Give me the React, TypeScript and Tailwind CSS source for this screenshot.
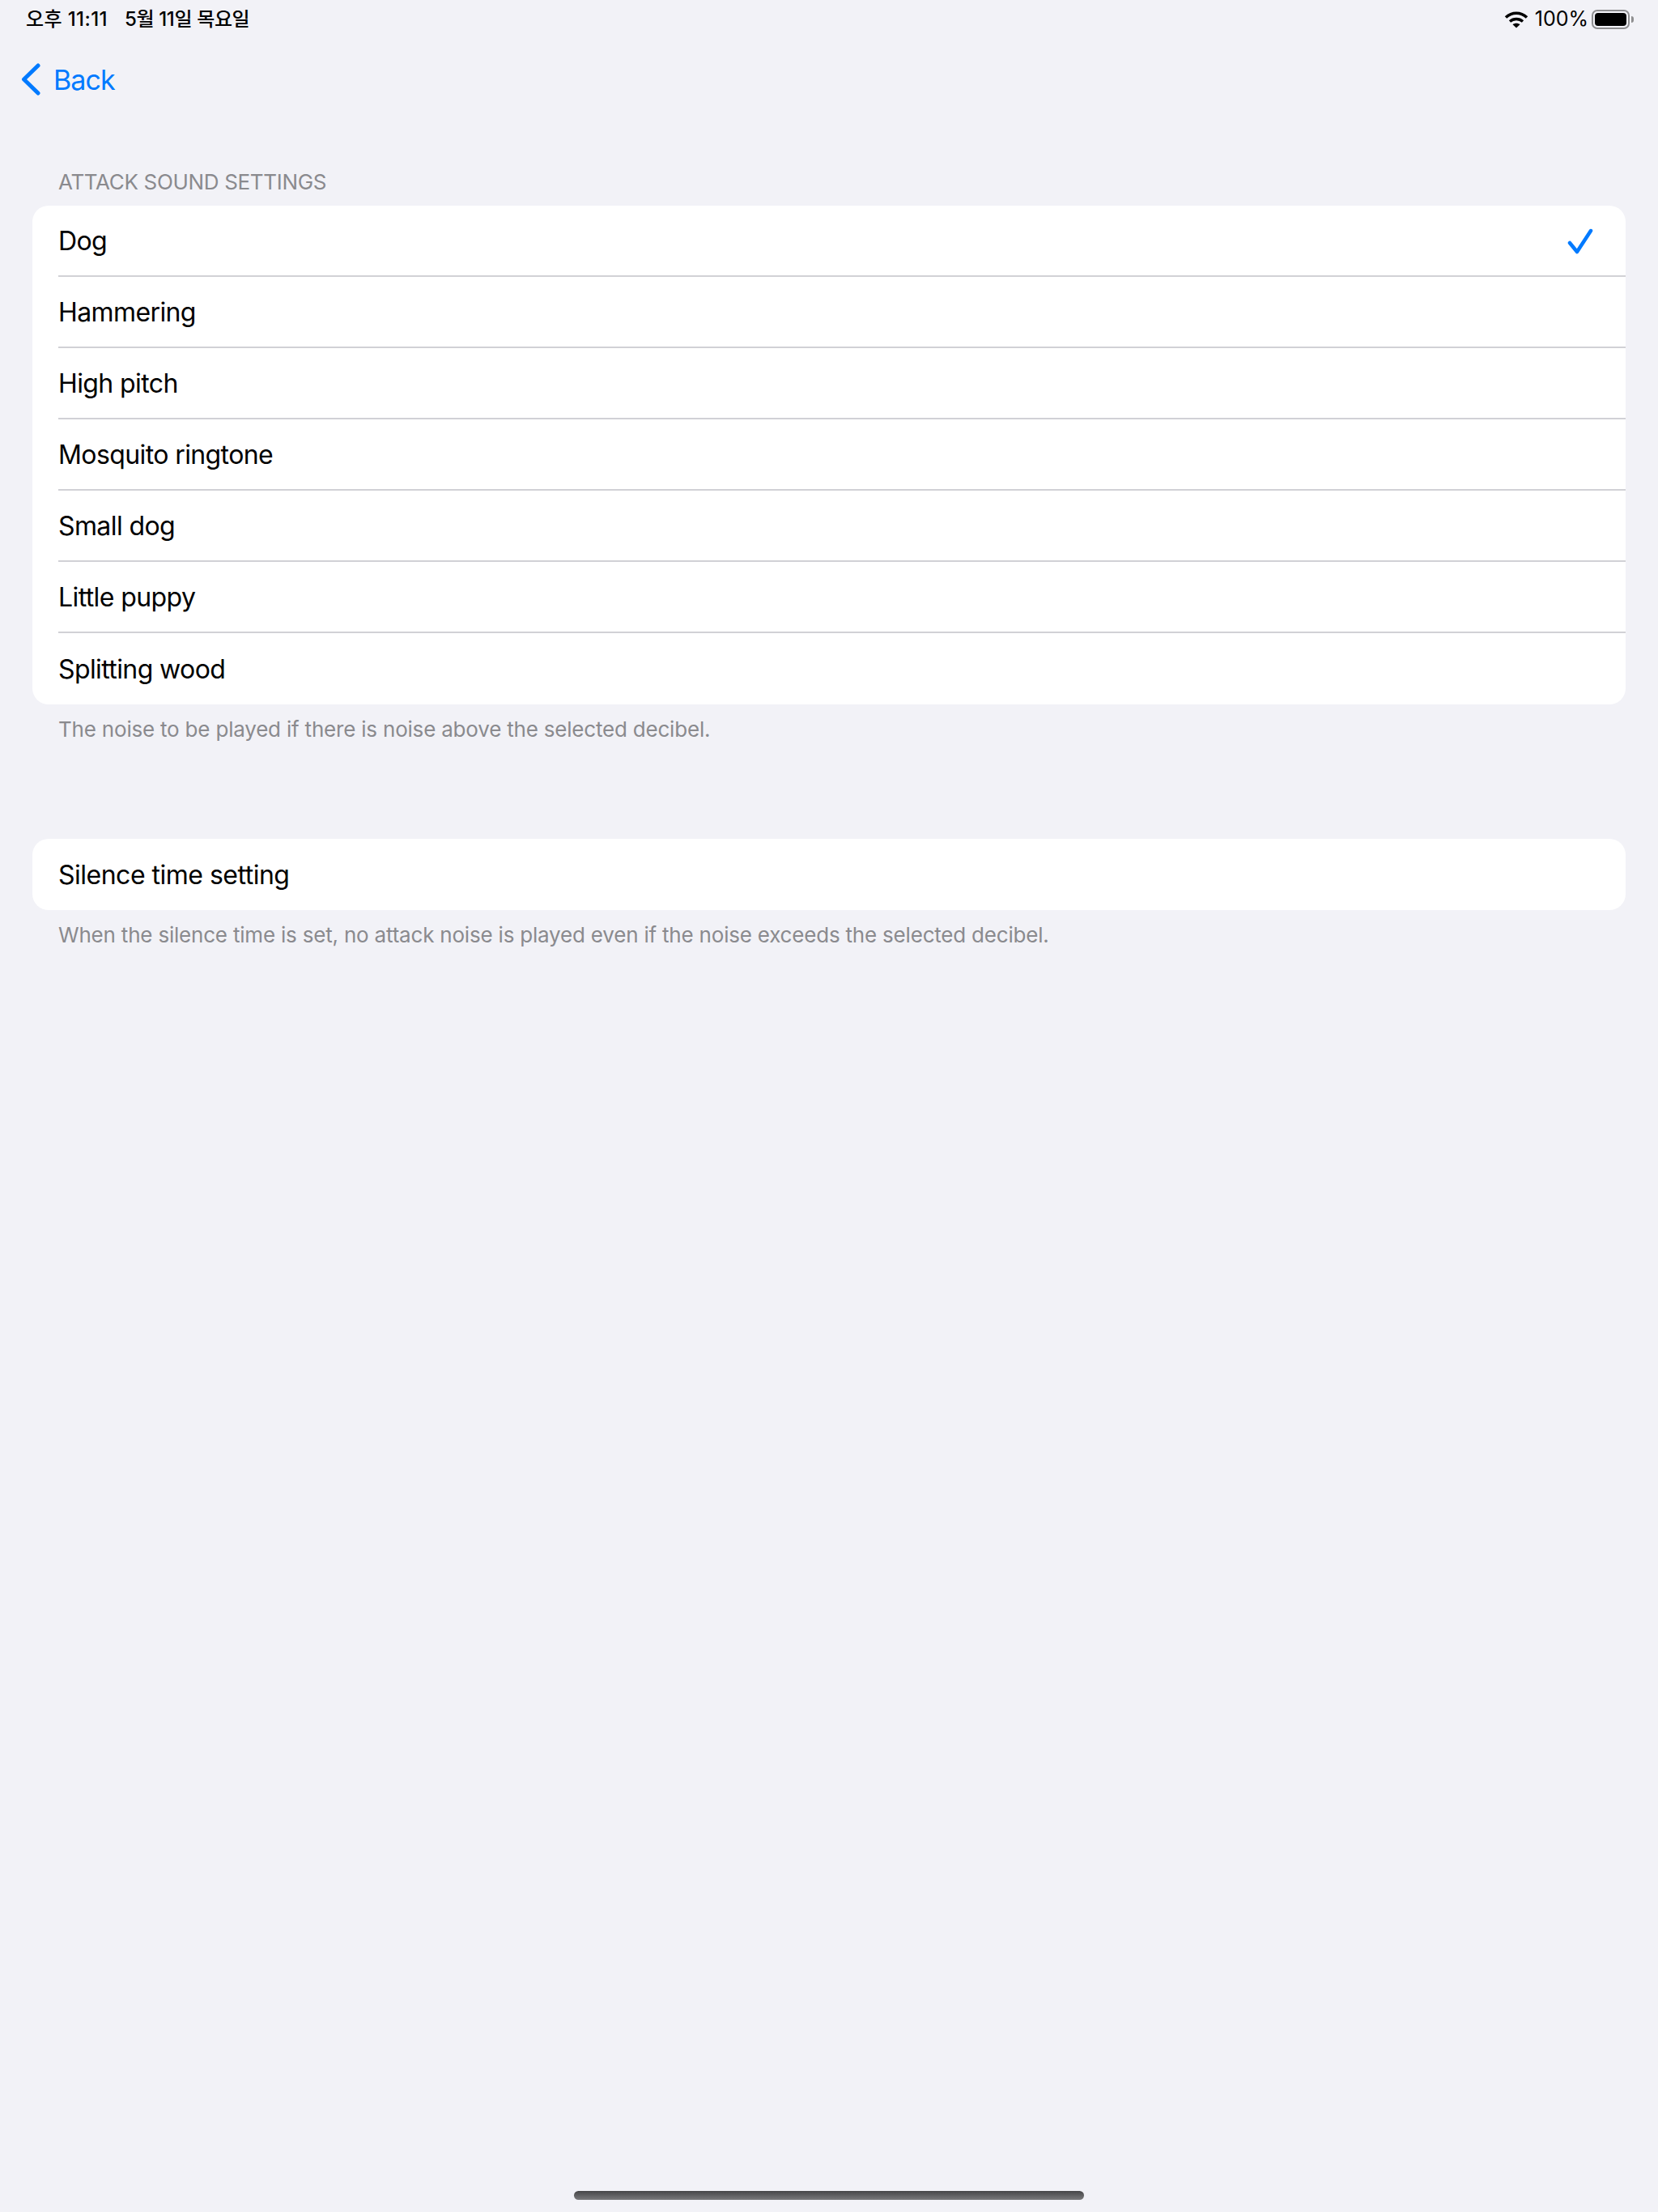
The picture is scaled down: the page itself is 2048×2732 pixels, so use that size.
const sounds = ['Dog', 'Hammering', 'High pitch', 'Mosquito ringtone', 'Small dog', 'Little puppy', 'Splitting wood']

function Wifi() {
  return (
    <svg width="30" height="22" viewBox="0 0 30 22" fill="none" stroke="#000">
      <path d="M2 8.5C9.5 1.5 20.5 1.5 28 8.5" strokeWidth="3.6" />
      <path d="M7 13.5C11.5 9.5 18.5 9.5 23 13.5" strokeWidth="3.4" />
      <path d="M15 21.5L10.5 17.2C13 15.2 17 15.2 19.5 17.2Z" fill="#000" stroke="none" />
    </svg>
  )
}

function Battery() {
  return (
    <div className="flex items-center gap-[2px]">
      <div className="w-[47px] h-[24px] rounded-[7px] border-2 border-[#8e8e90] p-[2px]">
        <div className="w-full h-full rounded-[4px] bg-black" />
      </div>
      <div className="w-[3px] h-[8px] rounded-r-[3px] bg-[#8e8e90]" />
    </div>
  )
}

export default function App() {
  return (
    <div className="min-h-[2732px] flex flex-col bg-[#f2f2f7] text-black font-['Inter','Noto_Sans_CJK_KR',sans-serif]">
      {/* status bar */}
      <div className="h-[46px] pt-[2px] pl-[32px] pr-[30px] flex items-center justify-between text-[24px] font-medium">
        <div className="flex gap-[21px]">
          <span className="tracking-[0.4px]">오후 11:11</span>
          <span className="tracking-[-0.35px]">5월 11일 목요일</span>
        </div>
        <div className="flex items-center">
          <Wifi />
          <span className="ml-[8px] mr-[4px] font-normal text-[25px]">100%</span>
          <Battery />
        </div>
      </div>

      {/* nav */}
      <div className="h-[104px] pl-[26px] flex items-center gap-[16px] text-[34px] tracking-[-0.9px] text-[#007aff]">
        <svg width="24" height="40" viewBox="0 0 24 40" fill="none" stroke="#007aff" strokeWidth="5" strokeLinecap="round" strokeLinejoin="round">
          <path d="M21 3L3.5 20L21 37" />
        </svg>
        <span>Back</span>
      </div>

      <div className="px-[40px]">
        <div className="pl-[32px] pt-[60px] pb-[14px] text-[26px] leading-[30px] tracking-[-0.33px] text-[#8a8a8e]">ATTACK SOUND SETTINGS</div>
        <div className="bg-white rounded-[20px] overflow-hidden">
          {sounds.map((name, idx) => (
            <div key={name} className="h-[88px] pl-[32px]">
              <div className={idx < sounds.length - 1 ? 'h-full pr-[40px] flex items-center justify-between border-b-2 border-[#d1d1d6]' : 'h-full pr-[40px] flex items-center justify-between'}>
                <span className="pt-[2px] text-[32px] tracking-[-0.6px]">{name}</span>
                {name === 'Dog' && (
                  <svg className="mt-[2px]" width="32" height="32" viewBox="0 0 32 32" fill="none" stroke="#007aff" strokeWidth="4.5" strokeLinecap="round" strokeLinejoin="round">
                    <path d="M3 18L12 29L29 3" />
                  </svg>
                )}
              </div>
            </div>
          ))}
        </div>
        <div className="pl-[32px] pt-[16px] text-[26px] leading-[30px] tracking-[-0.2px] text-[#8a8a8e]">The noise to be played if there is noise above the selected decibel.</div>

        <div className="mt-[120px] h-[88px] pl-[32px] flex items-center bg-white rounded-[20px]">
          <span className="pt-[2px] text-[32px] tracking-[-0.5px]">Silence time setting</span>
        </div>
        <div className="pl-[32px] pt-[16px] text-[26px] leading-[30px] tracking-[-0.2px] text-[#8a8a8e]">When the silence time is set, no attack noise is played even if the noise exceeds the selected decibel.</div>
      </div>

      <div className="flex-1" />
      {/* home indicator */}
      <div className="h-[26px] flex justify-center">
        <div className="w-[630px] h-[11px] rounded-full bg-gradient-to-b from-[#464648] to-[#7a7a7c]" />
      </div>
    </div>
  )
}
